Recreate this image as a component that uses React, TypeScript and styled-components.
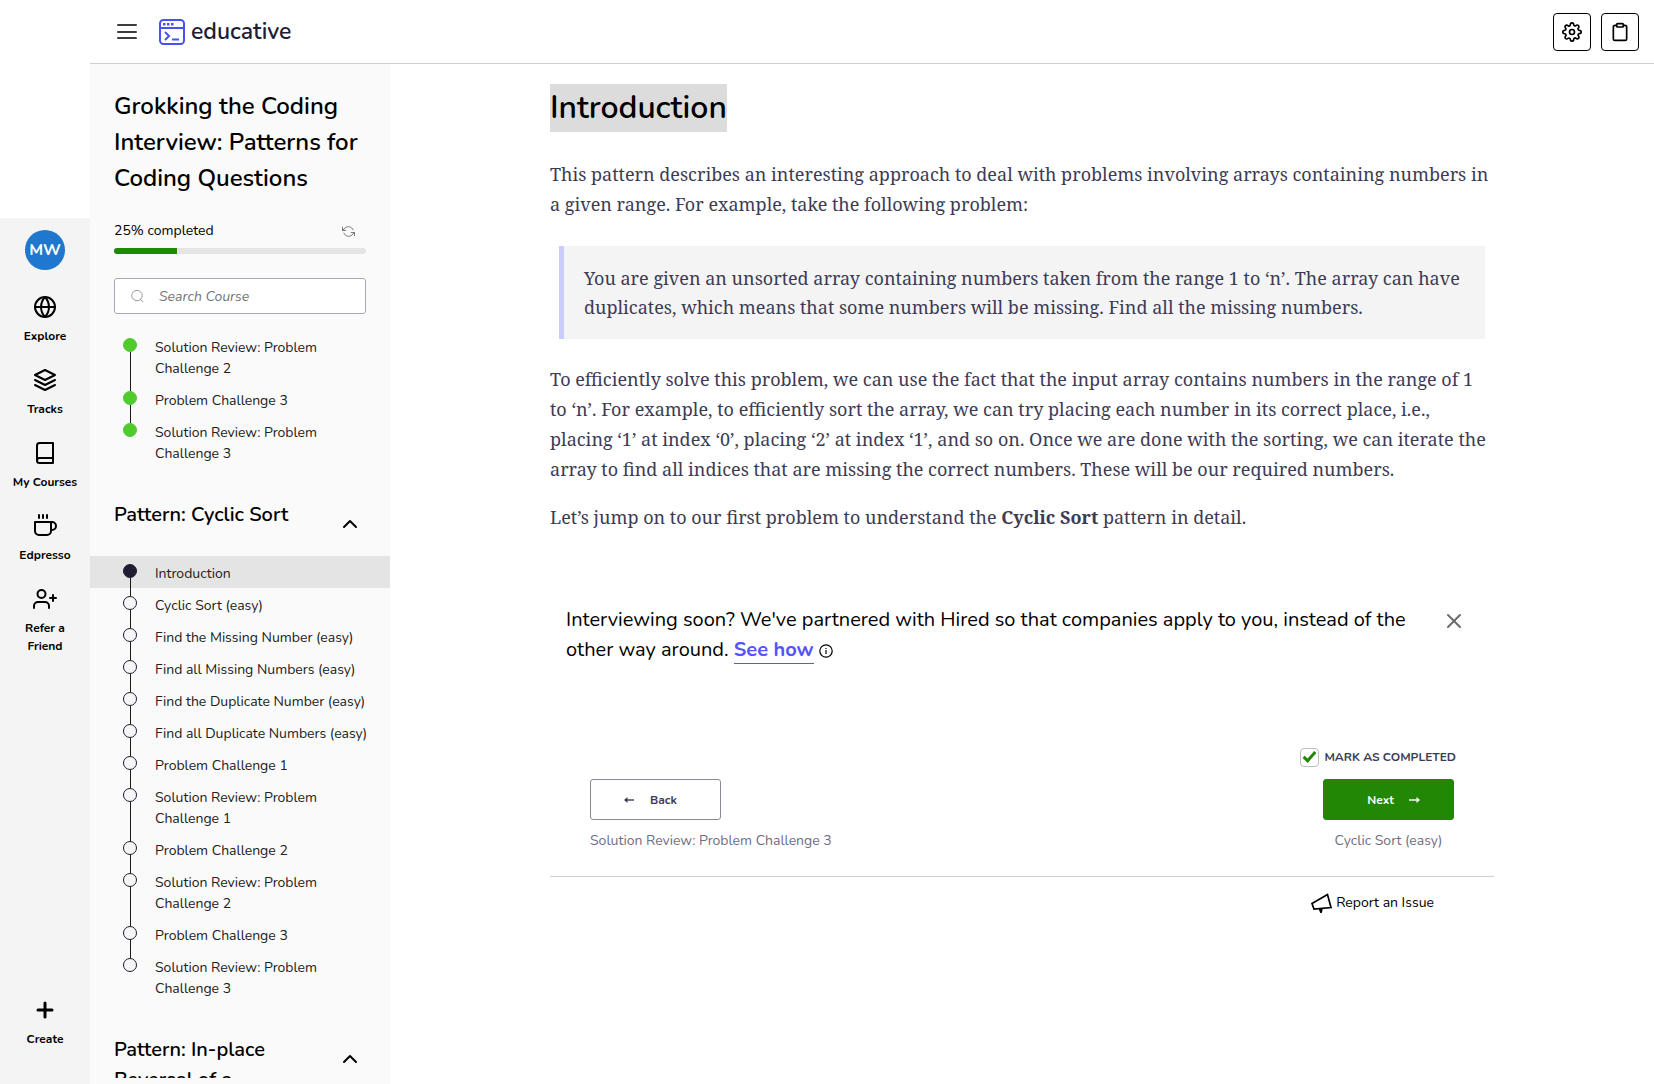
import React from "react";
import styled, { createGlobalStyle } from "styled-components";
import {
  FiGlobe,
  FiLayers,
  FiBook,
  FiCoffee,
  FiUserPlus,
  FiPlus,
  FiSettings,
  FiClipboard,
  FiX,
  FiChevronUp,
  FiRefreshCcw,
} from "react-icons/fi";

const sans = `Nunito, Lato, "Noto Sans", sans-serif`;
const serif = `"Noto Serif", "Liberation Serif", serif`;

const GlobalStyle = createGlobalStyle`
  *, *::before, *::after { box-sizing: border-box; }
  body { margin: 0; background: #fff; color: #000; font-family: ${sans}; }
  h1, h2, p, ul, blockquote { margin: 0; padding: 0; }
  ul { list-style: none; }
  a { color: inherit; text-decoration: none; }
  button { font-family: inherit; color: inherit; cursor: pointer; padding: 0; border: 0; background: none; }
  svg { display: block; flex: none; }
`;

const Shell = styled.div`
  display: flex;
  height: 100vh;
`;

const Rail = styled.nav`
  flex: 0 0 90px;
  display: flex;
  flex-direction: column;
  align-items: center;
  gap: 23px;
  margin-top: 218px;
  padding: 12px 8px 36px;
  background: #f4f4f4;
`;

const Avatar = styled.button`
  display: flex;
  align-items: center;
  justify-content: center;
  width: 40px;
  height: 40px;
  margin-bottom: 2px;
  border-radius: 50%;
  background: #1f78ce;
  color: #fff;
  font-size: 16px;
  font-weight: 700;
`;

const RailLink = styled.a<{ $last?: boolean }>`
  display: flex;
  flex-direction: column;
  align-items: center;
  gap: 8px;
  margin-top: ${(p) => (p.$last ? "auto" : "0")};
  font-size: 12px;
  line-height: 18px;
  font-weight: 700;
  text-align: center;
`;

const RailText = styled.span`
  max-width: 74px;
`;

const Page = styled.div`
  flex: 1;
  min-width: 0;
  display: flex;
  flex-direction: column;
`;

const TopBar = styled.header`
  flex: 0 0 64px;
  display: flex;
  align-items: center;
  gap: 10px;
  padding: 0 15px 0 25px;
  border-bottom: 1px solid #d0d0d0;
`;

const MenuButton = styled.button`
  width: 24px;
  height: 24px;
`;

const Brand = styled.a`
  display: flex;
  align-items: center;
  gap: 6px;
  margin: 0 auto 0 10px;
  color: #1e1d33;
  font-size: 23px;
  line-height: 28px;
  font-weight: 600;
`;

const SquareButton = styled.button`
  display: flex;
  align-items: center;
  justify-content: center;
  width: 38px;
  height: 38px;
  border: 1px solid #000;
  border-radius: 4px;
`;

const Body = styled.div`
  flex: 1;
  min-height: 0;
  display: flex;
`;

const Sidebar = styled.aside`
  flex: 0 0 300px;
  display: flex;
  flex-direction: column;
  padding: 24px 0 6px;
  background: #fafafa;
`;

const CourseHead = styled.div`
  flex: none;
  padding: 0 24px 16px;
`;

const CourseTitle = styled.h2`
  font-size: 24px;
  line-height: 36px;
  font-weight: 600;
`;

const ProgressRow = styled.div`
  display: flex;
  align-items: center;
  justify-content: space-between;
  margin-top: 24px;
  padding-right: 11px;
  font-size: 14px;
  line-height: 22px;
`;

const ResetButton = styled.button`
  color: #5a5a5a;
`;

const ProgressTrack = styled.div`
  height: 6px;
  margin: 6px 0 24px;
  border-radius: 3px;
  background: #e4e4e4;
  overflow: hidden;
`;

const ProgressFill = styled.div`
  height: 100%;
  background: #218705;
`;

const SearchBox = styled.label`
  display: flex;
  align-items: center;
  gap: 15px;
  height: 36px;
  padding: 0 16px;
  border: 1px solid #a9a8b5;
  border-radius: 3px;
  background: #fff;
`;

const SearchInput = styled.input`
  flex: 1;
  min-width: 0;
  border: 0;
  outline: 0;
  padding: 0;
  background: none;
  font: italic 14px ${sans};
  &::placeholder { color: #757575; opacity: 1; }
`;

const Outline = styled.div`
  flex: 1;
  min-height: 0;
  overflow: hidden;
`;

const SectionHead = styled.div`
  display: flex;
  align-items: flex-start;
  justify-content: space-between;
  padding: 32px 28px 20px 24px;
`;

const SectionTitle = styled.h2`
  max-width: 200px;
  font-size: 20px;
  line-height: 30px;
  font-weight: 600;
`;

const FoldButton = styled.button`
  margin-top: 12px;
`;

type State = "done" | "current" | "open";
const dotFill: Record<State, string> = { done: "#50cb2d", current: "#1e1d33", open: "#f6f6f6" };

const Dot = styled.span<{ $state: State }>`
  flex: none;
  width: 14px;
  height: 14px;
  border: 1px solid ${(p) => (p.$state === "done" ? "#50cb2d" : "#1e1d33")};
  border-radius: 50%;
  background: ${(p) => dotFill[p.$state]};
`;

const Marker = styled.span`
  display: flex;
  flex-direction: column;
  align-items: center;
  width: 14px;
  margin: 1px 0 -12px;
`;

const Stem = styled.span`
  flex: 1;
  width: 2px;
  border-right: 1px solid #1b1b1b;
`;

const LessonLink = styled.a<{ $active: boolean }>`
  display: flex;
  gap: 18px;
  padding: 7px 12px 4px 33px;
  background: ${(p) => (p.$active ? "#e4e4e4" : "transparent")};
  color: #212121;
  font-size: 14px;
  line-height: 21px;
`;

const LessonText = styled.span`
  flex: 1;
`;

const Main = styled.main`
  flex: 1;
  min-width: 0;
  padding: 20px 24px;
  overflow: hidden;
`;

const Article = styled.article`
  max-width: 944px;
  margin: 0 auto;
`;

const PageTitle = styled.h1`
  margin-bottom: 27px;
  font-size: 32px;
  line-height: 48px;
  font-weight: 600;
  span { display: inline-block; background: #dcdcdc; }
`;

const Para = styled.p`
  margin-bottom: 18px;
  color: #3d3b54;
  font-family: ${serif};
  font-size: 18px;
  line-height: 30px;
`;

const Quote = styled.blockquote`
  margin: 27px 9px 25px;
  padding: 18px 20px 17px;
  border-left: 5px solid #cccbff;
  background: #f4f4f4;
  color: #3d3b54;
  font-family: ${serif};
  font-size: 18px;
  line-height: 29px;
`;

const Promo = styled.section`
  display: flex;
  align-items: flex-start;
  justify-content: space-between;
  margin-top: 73px;
  padding: 0 28px 0 16px;
  font-size: 20px;
  line-height: 30px;
`;

const PromoText = styled.p`
  flex: 0 1 864px;
`;

const PromoLink = styled.a`
  border-bottom: 1px solid #5553ff;
  color: #5553ff;
  font-weight: 700;
`;

const InlineIcon = styled.button`
  display: inline-block;
  vertical-align: -2px;
  margin-left: 5px;
`;

const CloseButton = styled.button`
  margin-top: 4px;
  color: #6a6a6a;
`;

const Pager = styled.section`
  display: flex;
  align-items: flex-end;
  justify-content: space-between;
  margin-top: 82px;
  padding: 0 38px 25px 40px;
  border-bottom: 1px solid #d0d0d0;
`;

const PagerSide = styled.div<{ $end?: boolean }>`
  display: flex;
  flex-direction: column;
  align-items: ${(p) => (p.$end ? "flex-end" : "flex-start")};
`;

const StepGroup = styled.div<{ $center?: boolean }>`
  display: flex;
  flex-direction: column;
  align-items: ${(p) => (p.$center ? "center" : "flex-start")};
  gap: 11px;
  margin-right: 2px;
  color: #6f6e80;
  font-size: 14px;
  line-height: 20px;
`;

const StepButton = styled.button<{ $primary?: boolean }>`
  display: flex;
  align-items: center;
  justify-content: center;
  gap: 15px;
  width: 131px;
  height: 41px;
  padding-right: ${(p) => (p.$primary ? "0" : "10px")};
  padding-left: ${(p) => (p.$primary ? "10px" : "0")};
  border: 1px solid ${(p) => (p.$primary ? "#218705" : "#8a899a")};
  border-radius: 3px;
  background: ${(p) => (p.$primary ? "#218705" : "#fff")};
  color: ${(p) => (p.$primary ? "#fff" : "#3d3b54")};
  font-size: 12px;
  font-weight: 700;
`;

const DoneLabel = styled.label`
  display: flex;
  align-items: center;
  gap: 5px;
  margin-bottom: 12px;
  color: #3d3b54;
  font-size: 12px;
  line-height: 20px;
  font-weight: 700;
  text-transform: uppercase;
`;

const DoneBox = styled.input`
  appearance: none;
  width: 19px;
  height: 19px;
  margin: 0;
  border: 1px solid #bdbdbd;
  border-radius: 4px;
  background: #fff;
  display: grid;
  place-items: center;
  &:checked::after {
    content: "";
    width: 7px;
    height: 13px;
    margin-top: -3px;
    border: solid #218705;
    border-width: 0 3px 3px 0;
    transform: rotate(42deg);
  }
`;

const ReportRow = styled.div`
  display: flex;
  justify-content: flex-end;
  padding: 15px 60px 0 0;
`;

const ReportButton = styled.button`
  display: flex;
  align-items: center;
  gap: 4px;
  font-size: 14px;
  line-height: 22px;
`;

const MenuIcon = () => (
  <svg width="24" height="24" viewBox="0 0 24 24" stroke="#3c3c3c" strokeWidth="2" strokeLinecap="round">
    <path d="M3 5h18M3 12h18M3 18h18" />
  </svg>
);

const LogoIcon = () => (
  <svg width="26" height="26" viewBox="0 0 26 26" fill="none" stroke="#4951f5" strokeWidth="2">
    <rect x="1" y="1" width="24" height="24" rx="3.500" />
    <path d="M1 9h24M6 13l4 4-4 4M13 20.500h7" />
    <path strokeWidth="2.500" d="M4 5.200h2.500M8 5.200h2.500M12 5.200h2.500" />
  </svg>
);

const SearchIcon = () => (
  <svg width="13" height="14" viewBox="0 0 13 14" fill="none" stroke="#9a9a9a">
    <circle cx="6" cy="6.500" r="5.200" />
    <path d="M9 10l3 3" />
  </svg>
);

const InfoIcon = () => (
  <svg width="14" height="14" viewBox="0 0 14 14" fill="none" stroke="#000" strokeWidth="1.200">
    <circle cx="7" cy="7" r="6.200" />
    <path d="M7 6v4M7 4v1" />
  </svg>
);

const ArrowIcon = ({ back }: { back?: boolean }) => (
  <svg width="11" height="8" viewBox="0 0 11 8" fill="none" stroke="currentColor" strokeWidth="1.400">
    {back ? (
      <>
        <path d="M1 4h9" />
        <path d="M0 4l3.500-3v6z" fill="currentColor" stroke="none" />
      </>
    ) : (
      <>
        <path d="M0 4h9" />
        <path d="M11 4L7.500 1v6z" fill="currentColor" stroke="none" />
      </>
    )}
  </svg>
);

const MegaphoneIcon = () => (
  <svg width="21" height="20" viewBox="0 0 21 20" fill="none" stroke="#000" strokeWidth="1.700">
    <path d="M1 10.500L16.500 1.500l3.500 13L3 16zM8.500 16l1.500 3.500 1-3.800" />
  </svg>
);

const railItems = [
  { label: "Explore", icon: FiGlobe },
  { label: "Tracks", icon: FiLayers },
  { label: "My Courses", icon: FiBook },
  { label: "Edpresso", icon: FiCoffee },
  { label: "Refer a Friend", icon: FiUserPlus },
];

const doneLessons = ["Solution Review: Problem Challenge 2", "Problem Challenge 3", "Solution Review: Problem Challenge 3"];

const cyclicLessons = [
  "Introduction",
  "Cyclic Sort (easy)",
  "Find the Missing Number (easy)",
  "Find all Missing Numbers (easy)",
  "Find the Duplicate Number (easy)",
  "Find all Duplicate Numbers (easy)",
  "Problem Challenge 1",
  "Solution Review: Problem Challenge 1",
  "Problem Challenge 2",
  "Solution Review: Problem Challenge 2",
  "Problem Challenge 3",
  "Solution Review: Problem Challenge 3",
];

const LessonList = ({ lessons, done }: { lessons: string[]; done?: boolean }) => (
  <ul>
    {lessons.map((name, i) => {
      const state: State = done ? "done" : i === 0 ? "current" : "open";
      return (
        <li key={name}>
          <LessonLink href="#" $active={state === "current"}>
            <Marker>
              <Dot $state={state} />
              {i < lessons.length - 1 && <Stem />}
            </Marker>
            <LessonText>{name}</LessonText>
          </LessonLink>
        </li>
      );
    })}
  </ul>
);

const Section = ({ title }: { title: string }) => (
  <SectionHead>
    <SectionTitle>{title}</SectionTitle>
    <FoldButton aria-label={`Collapse ${title}`}>
      <FiChevronUp size={24} />
    </FoldButton>
  </SectionHead>
);

export default function App() {
  const progress = 25;
  return (
    <>
      <GlobalStyle />
      <Shell>
        <Rail>
          <Avatar>MW</Avatar>
          {railItems.map(({ label, icon: Icon }) => (
            <RailLink href="#" key={label}>
              <Icon size={24} />
              <RailText>{label}</RailText>
            </RailLink>
          ))}
          <RailLink href="#" $last>
            <FiPlus size={24} strokeWidth={3} />
            <RailText>Create</RailText>
          </RailLink>
        </Rail>
        <Page>
          <TopBar>
            <MenuButton aria-label="Menu">
              <MenuIcon />
            </MenuButton>
            <Brand href="#">
              <LogoIcon />
              educative
            </Brand>
            <SquareButton aria-label="Settings">
              <FiSettings size={20} />
            </SquareButton>
            <SquareButton aria-label="Notes">
              <FiClipboard size={20} />
            </SquareButton>
          </TopBar>
          <Body>
            <Sidebar>
              <CourseHead>
                <CourseTitle>Grokking the Coding Interview: Patterns for Coding Questions</CourseTitle>
                <ProgressRow>
                  {progress}% completed
                  <ResetButton aria-label="Reset progress">
                    <FiRefreshCcw size={13} strokeWidth={1.5} />
                  </ResetButton>
                </ProgressRow>
                <ProgressTrack>
                  <ProgressFill style={{ width: `${progress}%` }} />
                </ProgressTrack>
                <SearchBox>
                  <SearchIcon />
                  <SearchInput placeholder="Search Course" aria-label="Search Course" />
                </SearchBox>
              </CourseHead>
              <Outline>
                <LessonList lessons={doneLessons} done />
                <Section title="Pattern: Cyclic Sort" />
                <LessonList lessons={cyclicLessons} />
                <Section title="Pattern: In-place Reversal of a" />
              </Outline>
            </Sidebar>
            <Main>
              <Article>
                <PageTitle>
                  <span>Introduction</span>
                </PageTitle>
                <Para>
                  This pattern describes an interesting approach to deal with problems involving arrays containing numbers in a
                  given range. For example, take the following problem:
                </Para>
                <Quote>
                  You are given an unsorted array containing numbers taken from the range 1 to ‘n’. The array can have duplicates,
                  which means that some numbers will be missing. Find all the missing numbers.
                </Quote>
                <Para>
                  To efficiently solve this problem, we can use the fact that the input array contains numbers in the range of 1 to
                  ‘n’. For example, to efficiently sort the array, we can try placing each number in its correct place, i.e.,
                  placing ‘1’ at index ‘0’, placing ‘2’ at index ‘1’, and so on. Once we are done with the sorting, we can iterate
                  the array to find all indices that are missing the correct numbers. These will be our required numbers.
                </Para>
                <Para>
                  Let’s jump on to our first problem to understand the <b>Cyclic Sort</b> pattern in detail.
                </Para>
                <Promo>
                  <PromoText>
                    Interviewing soon? We've partnered with Hired so that companies apply to you, instead of the other way around.{" "}
                    <PromoLink href="#">See how</PromoLink>
                    <InlineIcon aria-label="More information">
                      <InfoIcon />
                    </InlineIcon>
                  </PromoText>
                  <CloseButton aria-label="Dismiss">
                    <FiX size={24} />
                  </CloseButton>
                </Promo>
                <Pager>
                  <PagerSide>
                    <StepGroup>
                      <StepButton>
                        <ArrowIcon back />
                        Back
                      </StepButton>
                      Solution Review: Problem Challenge 3
                    </StepGroup>
                  </PagerSide>
                  <PagerSide $end>
                    <DoneLabel>
                      <DoneBox type="checkbox" defaultChecked />
                      Mark as completed
                    </DoneLabel>
                    <StepGroup $center>
                      <StepButton $primary>
                        Next
                        <ArrowIcon />
                      </StepButton>
                      Cyclic Sort (easy)
                    </StepGroup>
                  </PagerSide>
                </Pager>
                <ReportRow>
                  <ReportButton>
                    <MegaphoneIcon />
                    Report an Issue
                  </ReportButton>
                </ReportRow>
              </Article>
            </Main>
          </Body>
        </Page>
      </Shell>
    </>
  );
}
